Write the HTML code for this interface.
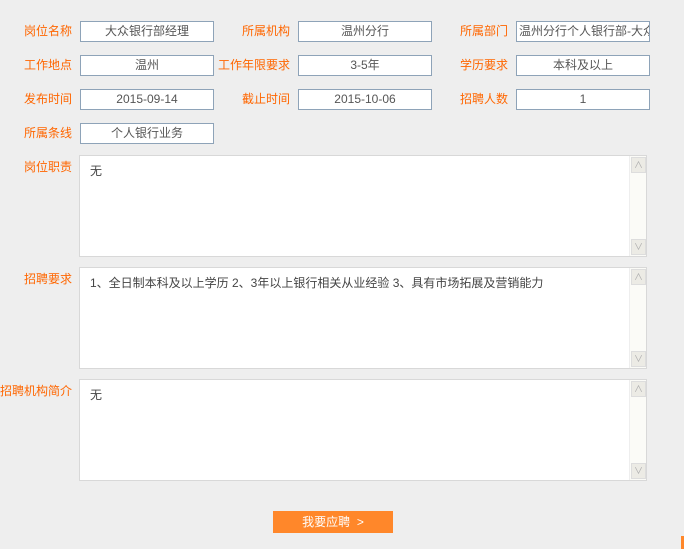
<!DOCTYPE html>
<html><head><meta charset="utf-8"><style>
body{margin:0;background:#eeeeee;width:684px;height:549px;overflow:hidden;position:relative;font-family:"Liberation Sans","Noto Sans CJK SC",sans-serif;font-size:12px}
.l{position:absolute;color:#ff6600;text-align:right;width:80px;line-height:20px}
.i{position:absolute;width:132px;height:19px;background:#fff;border:1px solid #8ea3b8;color:#555;text-align:center;line-height:19px;white-space:nowrap;overflow:hidden}
.t{position:absolute;left:79px;width:566px;height:100px;background:#fff;border:1px solid #d8d8d8;color:#444}
.t span{position:absolute;left:10px;top:6px}
.sb{position:absolute;right:0;top:0;width:16px;height:100px;background:#fbfbf7;border-left:1px solid #eee}
.sb i{position:absolute;left:1px;width:13px;height:14px;background:#ecebe5;border:1px solid #ddd;color:#aaa;font-size:9px;text-align:center;line-height:14px;font-style:normal}
.btn{position:absolute;left:273px;top:511px;width:120px;height:22px;background:#ff872a;color:#fff;text-align:center;line-height:22px}
</style></head><body>
<div class="l" style="left:-8px;top:21px">岗位名称</div><div class="i" style="left:80px;top:21px">大众银行部经理</div>
<div class="l" style="left:210px;top:21px">所属机构</div><div class="i" style="left:298px;top:21px">温州分行</div>
<div class="l" style="left:428px;top:21px">所属部门</div><div class="i" style="left:516px;top:21px;text-align:left;padding-left:2px;width:130px">温州分行个人银行部-大众</div>
<div class="l" style="left:-8px;top:55px">工作地点</div><div class="i" style="left:80px;top:55px">温州</div>
<div class="l" style="left:210px;top:55px">工作年限要求</div><div class="i" style="left:298px;top:55px">3-5年</div>
<div class="l" style="left:428px;top:55px">学历要求</div><div class="i" style="left:516px;top:55px">本科及以上</div>
<div class="l" style="left:-8px;top:89px">发布时间</div><div class="i" style="left:80px;top:89px">2015-09-14</div>
<div class="l" style="left:210px;top:89px">截止时间</div><div class="i" style="left:298px;top:89px">2015-10-06</div>
<div class="l" style="left:428px;top:89px">招聘人数</div><div class="i" style="left:516px;top:89px">1</div>
<div class="l" style="left:-8px;top:123px">所属条线</div><div class="i" style="left:80px;top:123px">个人银行业务</div>
<div class="l" style="left:-8px;top:157px">岗位职责</div>
<div class="t" style="top:155px"><span>无</span><div class="sb"><i style="top:1px">∧</i><i style="bottom:1px">∨</i></div></div>
<div class="l" style="left:-8px;top:269px">招聘要求</div>
<div class="t" style="top:267px"><span>1、全日制本科及以上学历 2、3年以上银行相关从业经验 3、具有市场拓展及营销能力</span><div class="sb"><i style="top:1px">∧</i><i style="bottom:1px">∨</i></div></div>
<div class="l" style="left:-8px;top:381px">招聘机构简介</div>
<div class="t" style="top:379px"><span>无</span><div class="sb"><i style="top:1px">∧</i><i style="bottom:1px">∨</i></div></div>
<div class="btn">我要应聘 &nbsp;&gt;</div>
<div style="position:absolute;left:681px;top:536px;width:3px;height:13px;background:#ff872a"></div>
</body></html>
